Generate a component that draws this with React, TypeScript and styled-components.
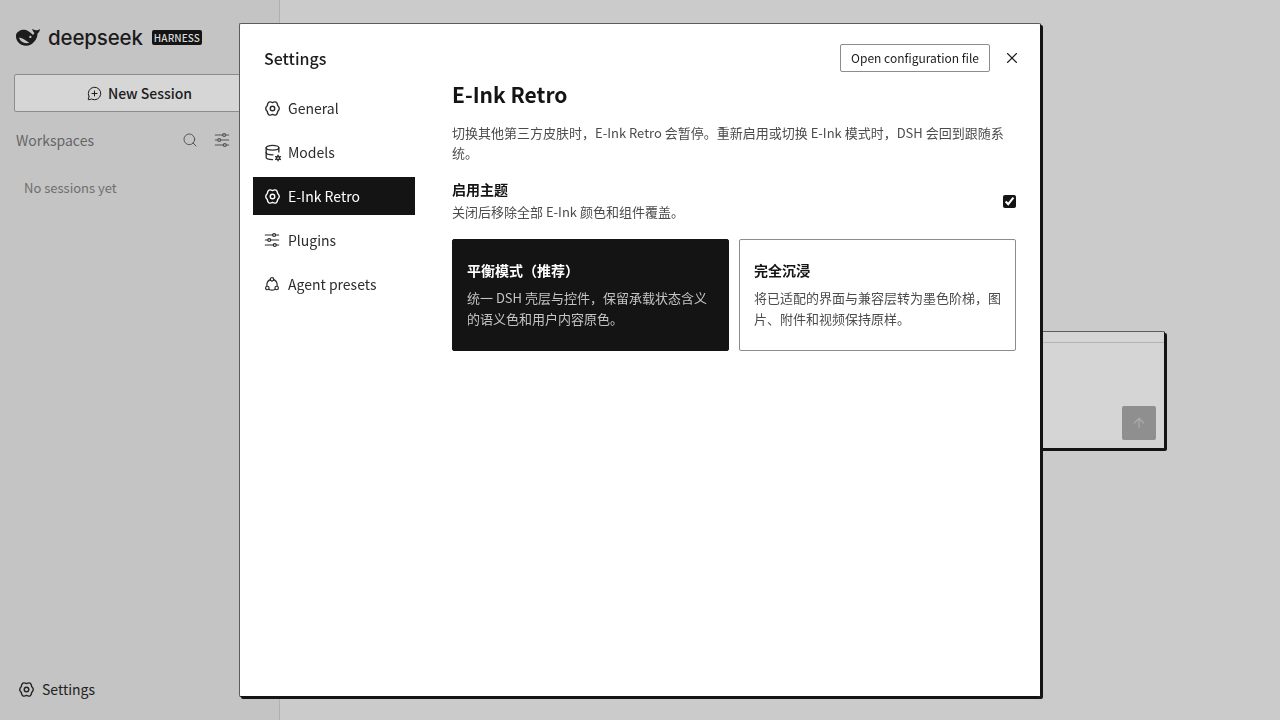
import React from 'react'
import styled, { createGlobalStyle } from 'styled-components'
import { X, ArrowUp, Search, MessageCirclePlus } from 'lucide-react'
import { TbDatabaseCog } from 'react-icons/tb'

const GlobalStyle = createGlobalStyle`
  * { box-sizing: border-box; }
  html, body { margin: 0; height: 100%; }
  body {
    font-family: "Noto Sans CJK SC", "Noto Sans", sans-serif;
    color: #141414;
    background: #cbcbcb;
  }
  button { font-family: inherit; }
`

const Page = styled.div`
  display: flex;
  width: 1280px;
  height: 720px;
  overflow: hidden;
`

const Sidebar = styled.aside`
  display: flex;
  flex-direction: column;
  flex: 0 0 280px;
  padding: 0 14px 0;
  background: #c4c4c4;
  border-right: 1px solid #b0b0b0;
`

const Brand = styled.div`
  display: flex;
  align-items: center;
  height: 74px;
  padding: 0 2px;
`

const Wordmark = styled.span`
  margin-left: 8px;
  font-family: "Inter", sans-serif;
  font-size: 20.5px;
  font-weight: 500;
  letter-spacing: -0.15px;
  color: #1c1c1c;
`

const Badge = styled.span`
  margin-left: 9px;
  padding: 0 2px;
  height: 15px;
  line-height: 15px;
  background: #141414;
  border-radius: 2px;
  color: #d8d8d8;
  font-size: 10px;
  font-weight: 500;
  letter-spacing: 0.1px;
`

const NewSession = styled.button`
  display: flex;
  align-items: center;
  justify-content: center;
  gap: 6px;
  height: 38px;
  flex: none;
  background: #d6d6d6;
  border: 1px solid #8c8c8c;
  border-radius: 2px;
  color: #1c1c1c;
  font-size: 14px;
  font-weight: 500;
`

const SectionRow = styled.div`
  display: flex;
  align-items: center;
  height: 28px;
  margin-top: 14px;
  padding: 0 2px;
  gap: 16px;
  color: #555;
`

const SectionLabel = styled.span`
  flex: 1;
  font-size: 14px;
  color: #666;
`

const SectionSpacer = styled.span`
  width: 17px;
`

const Empty = styled.div`
  margin-top: 24px;
  padding-left: 10px;
  font-size: 13px;
  line-height: 20px;
  color: #6e6e6e;
`

const SidebarFoot = styled.div`
  display: flex;
  align-items: center;
  gap: 8px;
  margin-top: auto;
  height: 62px;
  padding: 0 4px;
  font-size: 14px;
  color: #222;
`

const Main = styled.main`
  flex: 1;
  padding: 331px 0 0 114px;
`

const Composer = styled.div`
  display: flex;
  flex-direction: column;
  width: 771px;
  height: 118px;
  background: #d5d5d5;
  border: 1px solid #5c5c5c;
  border-right-color: #141414;
  border-bottom-color: #141414;
  border-radius: 2px;
  box-shadow: 2px 2px 0 #141414;
`

const ComposerBar = styled.div`
  height: 11px;
  border-bottom: 1px solid #b4b4b4;
`

const ComposerBody = styled.div`
  flex: 1;
  display: flex;
  justify-content: flex-end;
  align-items: flex-end;
  padding: 0 8px 8px 0;
`

const SendButton = styled.div`
  display: flex;
  align-items: center;
  justify-content: center;
  width: 34px;
  height: 34px;
  background: #8f8f8f;
  border-radius: 2px;
  color: #aaa;
`

const Overlay = styled.div`
  position: fixed;
  inset: 0;
  padding: 23px 0 0 239px;
`

const Dialog = styled.section`
  display: flex;
  flex-direction: column;
  width: 802px;
  height: 674px;
  padding: 20px 24px 0 13px;
  background: #fff;
  border: 1px solid #5c5c5c;
  border-right-color: #141414;
  border-bottom-color: #141414;
  border-radius: 2px;
  box-shadow: 2px 2px 0 #141414;
`

const DialogHead = styled.header`
  display: flex;
  align-items: center;
  height: 28px;
  padding-left: 11px;
`

const DialogTitle = styled.h2`
  flex: 1;
  margin: 0;
  font-size: 16px;
  font-weight: 500;
  color: #1c1c1c;
`

const GhostButton = styled.button`
  height: 28px;
  padding: 0 10px 2px;
  background: #fff;
  border: 1px solid #8c8c8c;
  border-radius: 2px;
  color: #1c1c1c;
  font-size: 12px;
`

const CloseButton = styled.button`
  display: flex;
  align-items: center;
  justify-content: center;
  width: 20px;
  height: 20px;
  margin: 0 -6px 0 12px;
  padding: 0;
  background: none;
  border: 0;
  color: #1c1c1c;
`

const DialogBody = styled.div`
  display: grid;
  grid-template-columns: 162px 1fr;
  column-gap: 37px;
`

const Nav = styled.nav`
  display: flex;
  flex-direction: column;
  gap: 6px;
  padding-top: 17px;
`

const NavItem = styled.div<{ $active?: boolean }>`
  display: flex;
  align-items: center;
  gap: 8px;
  height: 38px;
  padding: 0 11px;
  background: ${p => (p.$active ? '#141414' : 'transparent')};
  color: ${p => (p.$active ? '#fff' : '#2c2c2c')};
  font-size: 14px;
`

const NavIcon = styled.span`
  display: flex;
  align-items: center;
  justify-content: center;
  flex: 0 0 16px;
  width: 16px;
  min-width: 0;
  height: 16px;

  > svg {
    flex: none;
  }
`

const Content = styled.div`
  padding-top: 4px;
`

const Heading = styled.h1`
  margin: 0;
  font-size: 21px;
  line-height: 36px;
  font-weight: 700;
  color: #141414;
`

const Lead = styled.p`
  margin: 11px 0 0;
  font-size: 13px;
  line-height: 20px;
  color: #4c4c4c;
`

const ToggleRow = styled.div`
  display: flex;
  align-items: center;
  justify-content: space-between;
  margin-top: 16px;
`

const ToggleTitle = styled.div`
  font-size: 14px;
  line-height: 20px;
  font-weight: 700;
  color: #141414;
`

const ToggleHint = styled.div`
  margin-top: 3px;
  font-size: 13px;
  line-height: 20px;
  color: #4c4c4c;
`

const Check = styled.input`
  width: 13px;
  height: 13px;
  margin: 2px 0 0;
  accent-color: #141414;
`

const Modes = styled.div`
  display: grid;
  grid-template-columns: 1fr 1fr;
  gap: 10px;
  margin-top: 17px;
`

const ModeCard = styled.div<{ $active?: boolean }>`
  height: 112px;
  padding: 20px 14px 0;
  background: ${p => (p.$active ? '#141414' : '#fff')};
  border: 1px solid ${p => (p.$active ? '#141414' : '#8c8c8c')};
  border-radius: 2px;
`

const ModeTitle = styled.div<{ $active?: boolean }>`
  font-size: 14px;
  line-height: 20px;
  font-weight: 700;
  color: ${p => (p.$active ? '#fff' : '#141414')};
`

const ModeText = styled.div<{ $active?: boolean }>`
  margin-top: 7px;
  font-size: 13px;
  line-height: 21px;
  color: ${p => (p.$active ? '#c4c4c4' : '#4c4c4c')};
`

const GearSvg = styled.svg`
  flex: none;
  margin: 0 -0.5px;
`

const WhaleLogo = () => (
  <svg width="24" height="19" viewBox="0 0 24 19" fill="#1c1c1c" aria-hidden="true">
    <path d="M0 7C1 3 6 1 10 2c3 1 5 3 7 5l1.500-2C17.500 4 16.500 2.500 16 1c2 1 3.500 1.300 4.500 1.300S23 1.800 24 1c-.2 2-1.200 3.500-2.500 4.500 0 4.500-2.500 8.500-6.500 11-4 2-9 1.500-12-1.500C.8 12.800-.3 10 0 7Z" />
    <path fill="#c4c4c4" d="M3 9.500c2.500.4 4.800 1.400 6.800 3 1.200 1 2.400 1.700 3.700 2-2.600 1.100-5.500.8-7.500-.7C4.500 12.700 3.500 11.300 3 9.500Z" />
    <path fill="#c4c4c4" d="M14.300 7.800c.7 0 1.200.5 1.200 1.100s-.5 1-1.200 1-1.100-.5-1.100-1 .5-1.100 1.100-1.100Z" />
  </svg>
)

const GearIcon = () => (
  <GearSvg width="17" height="17" viewBox="0 0 24 24" fill="none" stroke="currentColor" strokeWidth="2" strokeLinejoin="round" aria-hidden="true">
    <path d="M12 3.600Q18.500.5 19.300 7.600Q23.800 12 19.300 16.400Q18.500 23.500 12 20.400Q5.500 23.500 4.700 16.400Q.2 12 4.700 7.600Q5.500.5 12 3.600Z" />
    <circle cx="12" cy="12" r="3.200" />
  </GearSvg>
)

const SlidersIcon = () => (
  <svg width="16" height="16" viewBox="0 0 24 24" fill="none" stroke="currentColor" strokeWidth="1.800" strokeLinecap="round" aria-hidden="true">
    <path d="M2 4.500h11M17.500 4.500H22" />
    <circle cx="15.200" cy="4.500" r="2.200" />
    <path d="M2 12h3.500M10 12h12" />
    <circle cx="7.800" cy="12" r="2.200" />
    <path d="M2 19.500h12M18.500 19.500H22" />
    <circle cx="16.200" cy="19.500" r="2.200" />
  </svg>
)

const PresetsIcon = () => (
  <svg width="16" height="16" viewBox="0 0 24 24" fill="none" stroke="currentColor" strokeWidth="1.800" strokeLinecap="round" aria-hidden="true">
    <circle cx="12" cy="5" r="2.600" />
    <circle cx="5" cy="18" r="2.600" />
    <circle cx="19" cy="18" r="2.600" />
    <path d="M9.400 5.500C6 7 4 10.500 4.300 14.500" />
    <path d="M14.600 5.500c3.400 1.500 5.400 5 5.100 9" />
    <path d="M7.800 20.200c2.700 1.400 5.700 1.400 8.400 0" />
  </svg>
)

const navItems = [
  { label: 'General', icon: <GearIcon /> },
  { label: 'Models', icon: <TbDatabaseCog size={19} strokeWidth={1.700} /> },
  { label: 'E-Ink Retro', icon: <GearIcon />, active: true },
  { label: 'Plugins', icon: <SlidersIcon /> },
  { label: 'Agent presets', icon: <PresetsIcon /> }
]

export default function App() {
  return (
    <Page>
      <GlobalStyle />
      <Sidebar>
        <Brand>
          <WhaleLogo />
          <Wordmark>deepseek</Wordmark>
          <Badge>HARNESS</Badge>
        </Brand>
        <NewSession>
          <MessageCirclePlus size={15} strokeWidth={1.6} />
          New Session
        </NewSession>
        <SectionRow>
          <SectionLabel>Workspaces</SectionLabel>
          <Search size={16} strokeWidth={1.5} />
          <SlidersIcon />
          <SectionSpacer />
        </SectionRow>
        <Empty>No sessions yet</Empty>
        <SidebarFoot>
          <GearIcon />
          Settings
        </SidebarFoot>
      </Sidebar>
      <Main>
        <Composer>
          <ComposerBar />
          <ComposerBody>
            <SendButton>
              <ArrowUp size={16} />
            </SendButton>
          </ComposerBody>
        </Composer>
      </Main>
      <Overlay>
        <Dialog>
          <DialogHead>
            <DialogTitle>Settings</DialogTitle>
            <GhostButton>Open configuration file</GhostButton>
            <CloseButton>
              <X size={18} strokeWidth={1.5} />
            </CloseButton>
          </DialogHead>
          <DialogBody>
            <Nav>
              {navItems.map(({ label, icon, active }) => (
                <NavItem key={label} $active={active}>
                  <NavIcon>{icon}</NavIcon>
                  {label}
                </NavItem>
              ))}
            </Nav>
            <Content>
              <Heading>E-Ink Retro</Heading>
              <Lead>
                切换其他第三方皮肤时，E-Ink Retro 会暂停。重新启用或切换 E-Ink 模式时，DSH 会回到跟随系统。
              </Lead>
              <ToggleRow>
                <div>
                  <ToggleTitle>启用主题</ToggleTitle>
                  <ToggleHint>关闭后移除全部 E-Ink 颜色和组件覆盖。</ToggleHint>
                </div>
                <Check type="checkbox" defaultChecked />
              </ToggleRow>
              <Modes>
                <ModeCard $active>
                  <ModeTitle $active>平衡模式（推荐）</ModeTitle>
                  <ModeText $active>统一 DSH 壳层与控件，保留承载状态含义的语义色和用户内容原色。</ModeText>
                </ModeCard>
                <ModeCard>
                  <ModeTitle>完全沉浸</ModeTitle>
                  <ModeText>将已适配的界面与兼容层转为墨色阶梯，图片、附件和视频保持原样。</ModeText>
                </ModeCard>
              </Modes>
            </Content>
          </DialogBody>
        </Dialog>
      </Overlay>
    </Page>
  )
}
